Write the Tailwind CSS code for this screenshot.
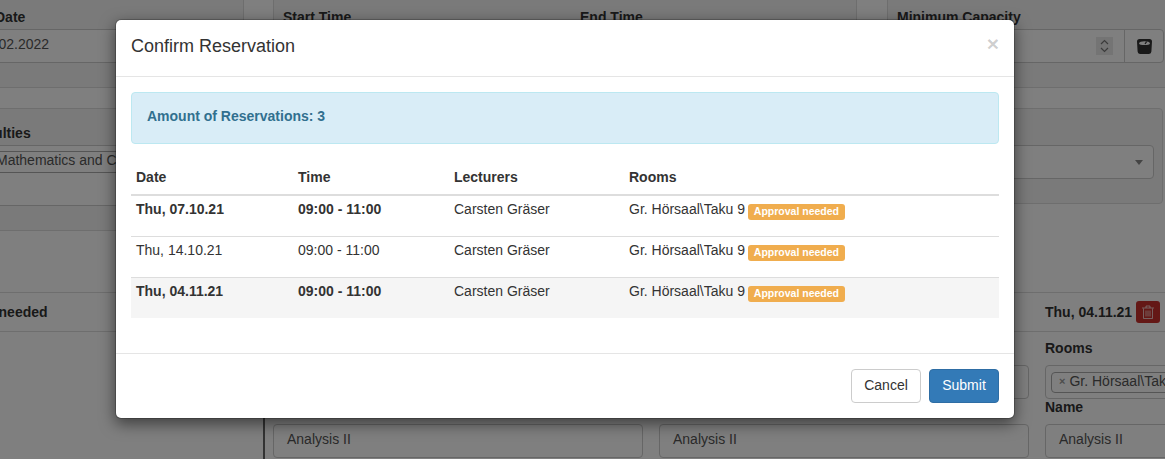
<!DOCTYPE html>
<html>
<head>
<meta charset="utf-8">
<title>Confirm Reservation</title>
<script src="https://cdn.jsdelivr.net/npm/@tailwindcss/browser@4"></script>
</head>
<body>
<div class="relative h-[459px] w-[1165px] overflow-hidden bg-white font-['Helvetica_Neue',Helvetica,Arial,'Liberation_Sans',sans-serif] text-[14px] leading-[20px] text-[#333]">

  <!-- page behind the dialog -->
  <div class="flex h-[292px] items-start">
    <div class="w-[244px] shrink-0 border-r border-[#ddd]">
      <div class="h-[88px] border-b border-[#ddd] bg-[#f5f5f5] pt-[7px]">
        <div class="ml-[-5px] font-bold">Date</div>
        <div class="ml-[-8px] mt-[2px] h-[34px] rounded border border-[#ccc] bg-white pt-[4px] text-[#555]"><span class="ml-[-14px]">21.02.2022</span></div>
      </div>
      <div class="mt-[20px] h-[123px] border-y border-[#ddd] bg-[#f5f5f5] pt-[14px]">
        <div class="ml-[-30px] font-bold">Faculties</div>
        <div class="ml-[-8px] mt-[2px] h-[61px] border border-[#ccc] bg-white pt-[5px]">
          <div class="h-[22px] whitespace-nowrap border-y border-[#aaa] bg-white leading-[16px] text-[#555]"><span class="ml-[3px]">Mathematics and Computer Science</span></div>
        </div>
      </div>
    </div>
    <div class="w-[29px] shrink-0"></div>
    <div class="flex h-[88px] w-[584px] shrink-0 border-x border-b border-[#ddd] bg-[#f5f5f5] pl-[9px] pt-[7px] font-bold">
      <div class="w-[297px]">Start Time</div>
      <div>End Time</div>
    </div>
    <div class="w-[30px] shrink-0"></div>
    <div class="w-[278px] shrink-0">
      <div class="h-[88px] border-b border-l border-[#ddd] bg-[#f5f5f5] pl-[9px] pt-[7px]">
        <div class="font-bold">Minimum Capacity</div>
        <div class="ml-[-9px] mt-[2px] flex h-[34px] w-[276px] items-center justify-end rounded border border-[#ccc] bg-white">
          <div class="mr-[11px] flex h-[18px] w-[17px] items-center justify-center bg-[#e8e8e8]">
            <svg width="9" height="14" viewBox="0 0 9 14" fill="none" stroke="#777" stroke-width="1.2"><path d="M1 5l3.5-3.5L8 5M1 9l3.5 3.5L8 9"/></svg>
          </div>
          <div class="flex h-full w-[39px] items-center justify-center border-l border-[#ccc]">
            <svg width="15" height="15" viewBox="0 0 15 15"><path d="M2.5 0h10A2.5 2.5 0 0 1 15 2.5l-.6 10A2.6 2.6 0 0 1 12 15H3a2.6 2.6 0 0 1-2.4-2.5L0 2.5A2.5 2.5 0 0 1 2.5 0z" fill="#333"/><path d="M2 4.4C2 1.6 13 1.6 13 4.4 13 6.4 2 6.4 2 4.4z" fill="#fff"/><path d="M8 5l1.6-2.4" stroke="#333" stroke-width="1.2"/></svg>
          </div>
        </div>
      </div>
      <div class="mt-[20px] h-[96px] w-[276px] rounded border border-[#ddd] bg-[#f5f5f5] pt-[36px]">
        <div class="flex h-[34px] w-[266px] items-center justify-end rounded border border-[#ccc] bg-white pr-[10px]">
          <span class="h-0 w-0 border-x-[4px] border-t-[5px] border-x-transparent border-t-[#888]"></span>
        </div>
      </div>
    </div>
  </div>

  <div class="flex h-[167px] items-start">
    <div class="h-[40px] w-[263px] shrink-0 whitespace-nowrap border-y border-[#ddd] pt-[9px] font-bold"><span class="ml-[-66px]">Approval needed</span></div>
    <div class="w-[902px] shrink-0">
      <div class="flex h-[40px] items-center border-y border-[#ddd] pl-[782px] font-bold">
        <span>Thu, 04.11.21</span>
        <span class="ml-[4px] flex h-[22px] w-[24px] items-center justify-center rounded-[3px] bg-[#c9302c]">
          <svg width="12" height="14" viewBox="0 0 12 14" fill="none" stroke="#fff" stroke-opacity="0.7" stroke-width="1"><path d="M0 3h12M4 3V1h4v2M1.5 3.5v10h9v-10M4 5.5v6M6 5.5v6M8 5.5v6"/></svg>
        </span>
      </div>
      <div class="flex h-[127px] gap-[16px] border-l-2 border-[#666] pl-[8px] pt-[6px]">
        <div class="w-[370px] shrink-0">
          <div class="font-bold">Rooms</div>
          <div class="mt-[7px] h-[34px] rounded border border-[#ccc] bg-white"></div>
          <div class="mt-[-2px] font-bold">Name</div>
          <div class="mt-[7px] h-[34px] rounded border border-[#ccc] bg-white pl-[13px] pt-[4px] text-[#555]">Analysis II</div>
        </div>
        <div class="w-[370px] shrink-0">
          <div class="font-bold">Rooms</div>
          <div class="mt-[7px] h-[34px] rounded border border-[#ccc] bg-white"></div>
          <div class="mt-[-2px] font-bold">Name</div>
          <div class="mt-[7px] h-[34px] rounded border border-[#ccc] bg-white pl-[13px] pt-[4px] text-[#555]">Analysis II</div>
        </div>
        <div class="w-[370px] shrink-0">
          <div class="font-bold">Rooms</div>
          <div class="mt-[7px] h-[34px] rounded border border-[#ccc] bg-white pl-[5px] pt-[6px]">
            <div class="flex h-[21px] w-[300px] items-center whitespace-nowrap rounded border border-[#aaa] bg-white pb-[3px] pl-[7px] text-[#555]"><span class="mr-[4px] text-[11px] font-bold text-[#999]">×</span>Gr. Hörsaal\Taku 9</div>
          </div>
          <div class="mt-[-2px] font-bold">Name</div>
          <div class="mt-[7px] h-[34px] rounded border border-[#ccc] bg-white pl-[13px] pt-[4px] text-[#555]">Analysis II</div>
        </div>
      </div>
    </div>
  </div>

  <!-- backdrop + dialog -->
  <div class="absolute inset-0 bg-black/50 pt-[19px]">
    <div class="ml-[115px] w-[900px] rounded-[6px] border border-black/20 bg-white bg-clip-padding shadow-[0_5px_15px_rgba(0,0,0,0.5)]">
      <div class="flex h-[57px] items-start justify-between border-b border-[#e5e5e5] px-[15px] pt-[13px]">
        <h4 class="text-[18px] leading-[26px]">Confirm Reservation</h4>
        <span class="text-[21px] font-bold leading-[21px] text-black/20">×</span>
      </div>
      <div class="px-[15px] pb-[15px] pt-[15px]">
        <div class="mb-[20px] rounded border border-[#bce8f1] bg-[#d9edf7] px-[15px] pb-[17px] pt-[13px] font-bold text-[#31708f]">Amount of Reservations: 3</div>
        <table class="mb-[20px] w-full table-fixed border-collapse">
          <colgroup><col class="w-[162px]"><col class="w-[156px]"><col class="w-[175px]"><col></colgroup>
          <thead>
            <tr class="border-b-2 border-[#ddd] text-left">
              <th class="px-[5px] pb-[7px] pt-[3px]">Date</th>
              <th class="px-[5px] pb-[7px] pt-[3px]">Time</th>
              <th class="px-[5px] pb-[7px] pt-[3px]">Lecturers</th>
              <th class="px-[5px] pb-[7px] pt-[3px]">Rooms</th>
            </tr>
          </thead>
          <tbody>
            <tr class="border-b border-[#ddd]">
              <td class="h-[41px] px-[5px] pb-[17px] pt-[3px] align-top font-bold">Thu, 07.10.21</td>
              <td class="px-[5px] pt-[3px] align-top font-bold">09:00 - 11:00</td>
              <td class="px-[5px] pt-[3px] align-top">Carsten Gräser</td>
              <td class="px-[5px] pt-[3px] align-top">Gr. Hörsaal\Taku 9 <span class="ml-[-1px] inline-block rounded-[3px] bg-[#f0ad4e] px-[6px] pb-[2px] align-[-1px] text-[10.5px] font-bold leading-[14px] text-white">Approval needed</span></td>
            </tr>
            <tr class="border-b border-[#ddd]">
              <td class="h-[41px] px-[5px] pb-[17px] pt-[3px] align-top">Thu, 14.10.21</td>
              <td class="px-[5px] pt-[3px] align-top">09:00 - 11:00</td>
              <td class="px-[5px] pt-[3px] align-top">Carsten Gräser</td>
              <td class="px-[5px] pt-[3px] align-top">Gr. Hörsaal\Taku 9 <span class="ml-[-1px] inline-block rounded-[3px] bg-[#f0ad4e] px-[6px] pb-[2px] align-[-1px] text-[10.5px] font-bold leading-[14px] text-white">Approval needed</span></td>
            </tr>
            <tr class="bg-[#f5f5f5]">
              <td class="h-[40px] px-[5px] pb-[17px] pt-[3px] align-top font-bold">Thu, 04.11.21</td>
              <td class="px-[5px] pt-[3px] align-top font-bold">09:00 - 11:00</td>
              <td class="px-[5px] pt-[3px] align-top">Carsten Gräser</td>
              <td class="px-[5px] pt-[3px] align-top">Gr. Hörsaal\Taku 9 <span class="ml-[-1px] inline-block rounded-[3px] bg-[#f0ad4e] px-[6px] pb-[2px] align-[-1px] text-[10.5px] font-bold leading-[14px] text-white">Approval needed</span></td>
            </tr>
          </tbody>
        </table>
      </div>
      <div class="flex justify-end gap-[8px] border-t border-[#e5e5e5] p-[15px]">
        <button class="h-[34px] w-[70px] rounded border border-[#ccc] bg-white pb-[3px]">Cancel</button>
        <button class="h-[34px] w-[70px] rounded border border-[#2e6da4] bg-[#337ab7] pb-[3px] text-white">Submit</button>
      </div>
    </div>
  </div>
</div>
</body>
</html>
